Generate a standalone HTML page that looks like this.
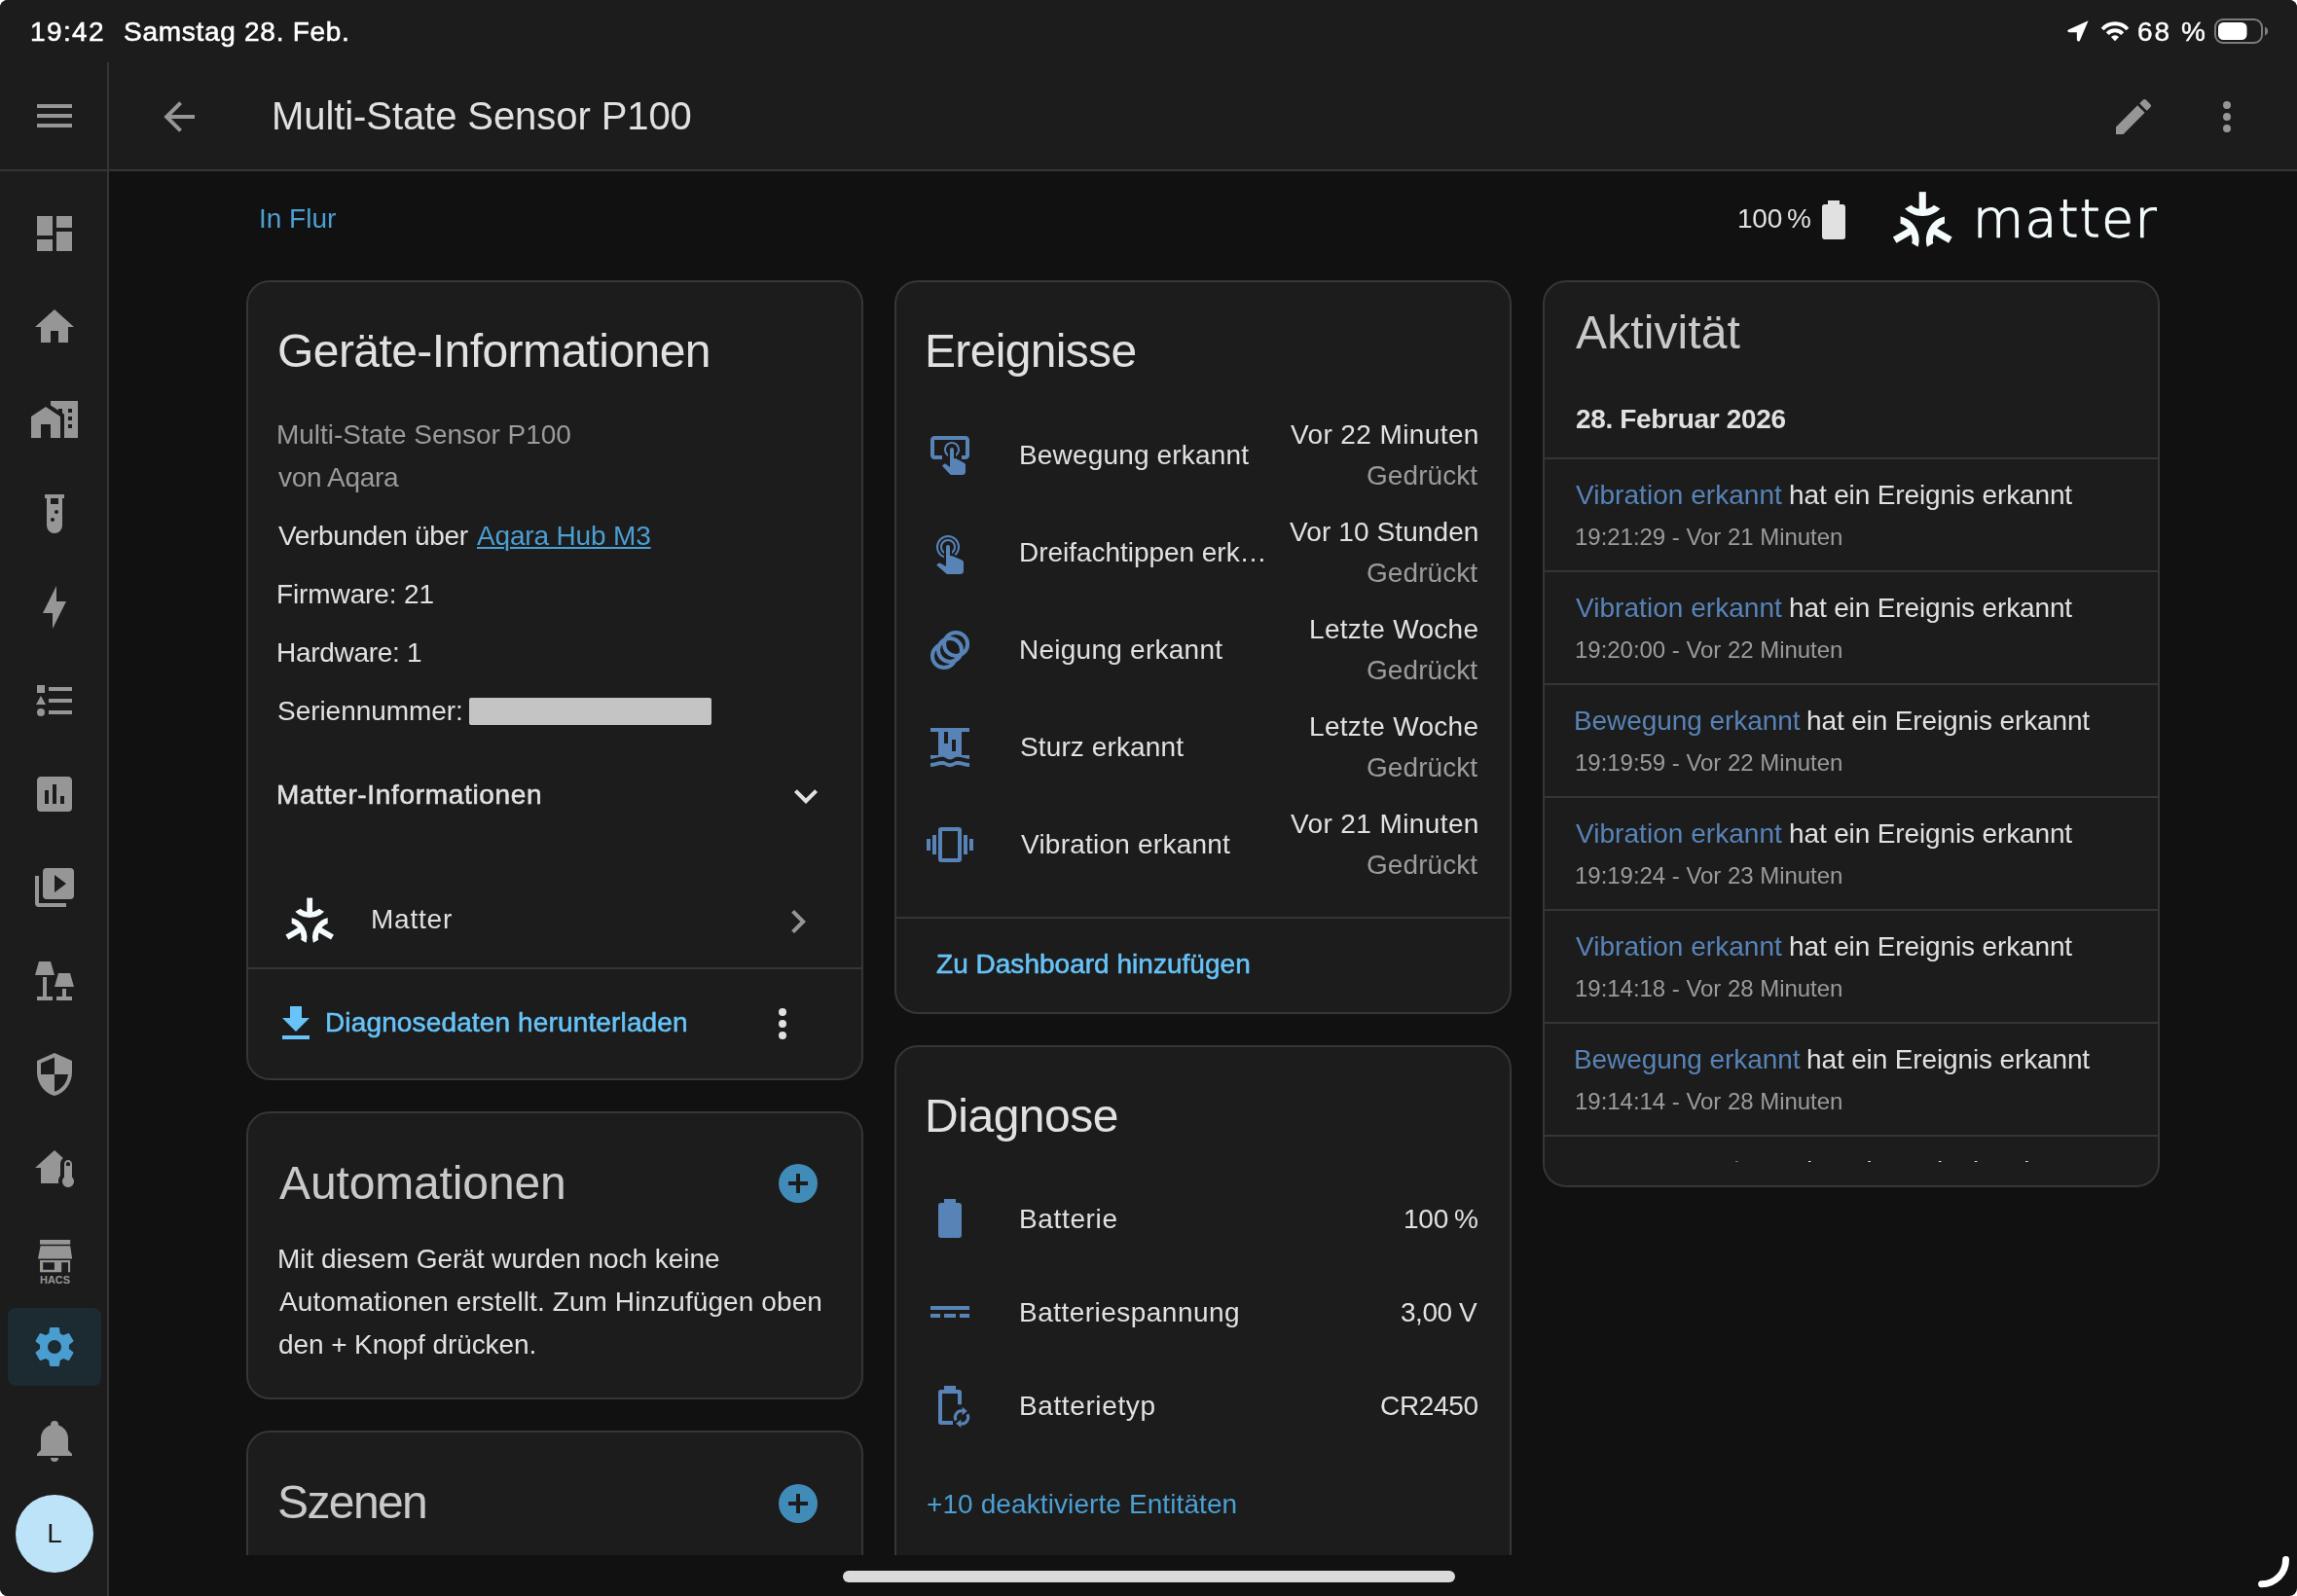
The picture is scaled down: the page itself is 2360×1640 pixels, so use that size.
<!DOCTYPE html>
<html lang="de">
<head>
<meta charset="utf-8">
<title>Multi-State Sensor P100 – Home Assistant</title>
<style>
html,body{margin:0;padding:0;background:#fff}
body{width:2360px;height:1640px;overflow:hidden;font-family:"Liberation Sans",sans-serif;-webkit-font-smoothing:antialiased}
#screen{position:relative;width:2360px;height:1640px;background:#111111;border-radius:8px;overflow:hidden}
h1,h2{margin:0;font-weight:400}
a{text-decoration:none}
.t{position:absolute;white-space:nowrap;font-kerning:normal;will-change:transform}
.i{position:absolute;display:block;overflow:visible}
.r{position:absolute}
.clip{position:absolute;overflow:hidden}
#content{position:absolute;left:0;top:0;width:2360px;height:1598px;overflow:hidden}
.card{position:absolute;box-sizing:border-box;background:#1c1c1c;border:2px solid #363636;border-radius:24px;display:block}
#statusbar{position:absolute;left:0;top:0;width:2360px;height:64px;background:#1c1c1c}
#header{position:absolute;left:112px;top:64px;width:2248px;height:112px;box-sizing:border-box;background:#1c1c1c;border-bottom:2px solid #353535}
#sidebar{position:absolute;left:0;top:64px;width:112px;height:1576px;box-sizing:border-box;background:#1c1c1c;border-right:2px solid #353535}
.avatar{will-change:transform;position:absolute;width:80px;height:80px;border-radius:50%;background:#bde3f9;color:#1c1c1c;font-size:28px;line-height:80px;text-align:center}
#homebar{position:absolute;left:866px;top:1614px;width:629px;height:12px;border-radius:6px;background:#dadada}
</style>
</head>
<body>
<div id="screen">
<main id="content">
<a id="area" class="t " style="top:206.75px;font-size:28px;line-height:35px;color:#4b9fd2;left:266.17px;letter-spacing:-0.010px;">In Flur</a>
<div id="batt" class="t " style="top:207.00px;font-size:28px;line-height:35px;color:#e1e1e1;left:1785.27px;letter-spacing:-0.246px;">100</div>
<div id="battp" class="t " style="top:207.00px;font-size:28px;line-height:35px;color:#e1e1e1;right:499.00px;">%</div>
<svg class="i" style="left:1860px;top:202px" width="48" height="48" viewBox="0 0 24 24" fill="#e1e1e1" ><path d="M16.67,4H15V2H9V4H7.33A1.33,1.33 0 0,0 6,5.33V20.67C6,21.4 6.6,22 7.33,22H16.67A1.33,1.33 0 0,0 18,20.67V5.33C18,4.6 17.4,4 16.67,4Z"/></svg>
<svg class="i" style="left:1940px;top:192px" width="76" height="76" viewBox="0 0 76 76"><defs><clipPath id="mclip2"><path d="M0,-26.21L-86.6,23.79L86.6,23.79Z"/></clipPath></defs><g transform="translate(35.26,38.16) scale(1.0000)"><g transform="rotate(0)"><path d="M0,-33V-11.60" fill="none" stroke="#f4fbfd" stroke-width="7.1"/><path clip-path="url(#mclip2)" d="M-18.90,-22.95A21.4,21.4 0 0 0 18.90,-22.95" fill="none" stroke="#f4fbfd" stroke-width="7.1"/></g><g transform="rotate(120)"><path d="M0,-33V-11.60" fill="none" stroke="#f4fbfd" stroke-width="7.1"/><path clip-path="url(#mclip2)" d="M-18.90,-22.95A21.4,21.4 0 0 0 18.90,-22.95" fill="none" stroke="#f4fbfd" stroke-width="7.1"/></g><g transform="rotate(240)"><path d="M0,-33V-11.60" fill="none" stroke="#f4fbfd" stroke-width="7.1"/><path clip-path="url(#mclip2)" d="M-18.90,-22.95A21.4,21.4 0 0 0 18.90,-22.95" fill="none" stroke="#f4fbfd" stroke-width="7.1"/></g></g></svg>
<div id="mw" class="t" style="left:2027px;top:190px;font-family:'DejaVu Sans',sans-serif;font-weight:200;font-size:53.4px;line-height:70px;color:#f4fbfd;letter-spacing:1.4px;-webkit-text-stroke:1.2px #f4fbfd">matter</div>
<section class="card " style="left:253px;top:288px;width:634px;height:822px">
<h2 id="c1h" class="t " style="top:41.00px;font-size:48px;line-height:60px;color:#e1e1e1;left:30.09px;letter-spacing:-0.563px;">Geräte-Informationen</h2>
<div id="c1m" class="t " style="top:139.00px;font-size:28px;line-height:35px;color:#9b9b9b;left:29.20px;letter-spacing:-0.028px;">Multi-State Sensor P100</div>
<div id="c1v" class="t " style="top:183.00px;font-size:28px;line-height:35px;color:#9b9b9b;left:31.40px;letter-spacing:-0.314px;">von Aqara</div>
<div id="c1c" class="t " style="top:243.00px;font-size:28px;line-height:35px;color:#e1e1e1;left:31.38px;letter-spacing:-0.323px;">Verbunden über</div>
<a id="c1l" class="t " style="top:243.00px;font-size:28px;line-height:35px;color:#4b9fd2;left:234.95px;letter-spacing:-0.160px;text-decoration:underline;text-decoration-thickness:2px;text-underline-offset:2px;">Aqara Hub M3</a>
<div id="c1f" class="t " style="top:303.00px;font-size:28px;line-height:35px;color:#e1e1e1;left:29.20px;letter-spacing:-0.110px;">Firmware: 21</div>
<div id="c1w" class="t " style="top:363.00px;font-size:28px;line-height:35px;color:#e1e1e1;left:29.20px;letter-spacing:-0.285px;">Hardware: 1</div>
<div id="c1s" class="t " style="top:423.00px;font-size:28px;line-height:35px;color:#e1e1e1;left:30.23px;letter-spacing:-0.048px;">Seriennummer:</div>
<div class="r" style="left:226.5px;top:426.5px;width:249.5px;height:28.5px;background:#c4c4c4;border-radius:2px;"></div>
<div id="c1i" class="t " style="top:509.00px;font-size:28px;line-height:35px;color:#e1e1e1;left:29.20px;letter-spacing:0.670px;-webkit-text-stroke:0.55px #e1e1e1;">Matter-Informationen</div>
<svg class="i" style="left:549px;top:504px" width="48" height="48" viewBox="0 0 24 24" fill="#e1e1e1" ><path d="M7.41,8.58L12,13.17L16.59,8.58L18,10L12,16L6,10L7.41,8.58Z"/></svg>
<svg class="i" style="left:33px;top:626px" width="60" height="60" viewBox="0 0 60 60"><defs><clipPath id="mclip1"><path d="M0,-26.21L-86.6,23.79L86.6,23.79Z"/></clipPath></defs><g transform="translate(30.2,33.5) scale(0.8152)"><g transform="rotate(0)"><path d="M0,-33V-11.60" fill="none" stroke="#f4fbfd" stroke-width="7.1"/><path clip-path="url(#mclip1)" d="M-18.90,-22.95A21.4,21.4 0 0 0 18.90,-22.95" fill="none" stroke="#f4fbfd" stroke-width="7.1"/></g><g transform="rotate(120)"><path d="M0,-33V-11.60" fill="none" stroke="#f4fbfd" stroke-width="7.1"/><path clip-path="url(#mclip1)" d="M-18.90,-22.95A21.4,21.4 0 0 0 18.90,-22.95" fill="none" stroke="#f4fbfd" stroke-width="7.1"/></g><g transform="rotate(240)"><path d="M0,-33V-11.60" fill="none" stroke="#f4fbfd" stroke-width="7.1"/><path clip-path="url(#mclip1)" d="M-18.90,-22.95A21.4,21.4 0 0 0 18.90,-22.95" fill="none" stroke="#f4fbfd" stroke-width="7.1"/></g></g></svg>
<div id="c1t" class="t " style="top:637.00px;font-size:28px;line-height:35px;color:#e1e1e1;left:125.70px;letter-spacing:0.780px;">Matter</div>
<svg class="i" style="left:541px;top:633px" width="48" height="48" viewBox="0 0 24 24" fill="#969696" ><path d="M8.59,16.58L13.17,12L8.59,7.41L10,6L16,12L10,18L8.59,16.58Z"/></svg>
<div class="r" style="left:0px;top:704px;width:630px;height:2px;background:#353535;"></div>
<svg class="i" style="left:25px;top:738px" width="48" height="48" viewBox="0 0 24 24" fill="#67c3f8" ><path d="M5,20H19V18H5M19,9H15V3H9V9H5L12,16L19,9Z"/></svg>
<div id="c1d" class="t " style="top:743.00px;font-size:28px;line-height:35px;color:#67c3f8;left:79.20px;letter-spacing:0.141px;-webkit-text-stroke:0.55px #67c3f8;">Diagnosedaten herunterladen</div>
<svg class="i" style="left:525px;top:738px" width="48" height="48" viewBox="0 0 24 24" fill="#e1e1e1" ><path d="M12,16A2,2 0 0,1 14,18A2,2 0 0,1 12,20A2,2 0 0,1 10,18A2,2 0 0,1 12,16M12,10A2,2 0 0,1 14,12A2,2 0 0,1 12,14A2,2 0 0,1 10,12A2,2 0 0,1 12,10M12,4A2,2 0 0,1 14,6A2,2 0 0,1 12,8A2,2 0 0,1 10,6A2,2 0 0,1 12,4Z"/></svg>
</section>
<section class="card " style="left:919px;top:288px;width:634px;height:754px">
<h2 id="c2h" class="t " style="top:41.00px;font-size:48px;line-height:60px;color:#e1e1e1;left:29.06px;letter-spacing:-0.671px;">Ereignisse</h2>
<svg class="i" style="left:31px;top:154px" width="48" height="48" viewBox="0 0 24 24" fill="#5783b7" ><path d="M13 5C15.21 5 17 6.79 17 9C17 10.5 16.2 11.77 15 12.46V11.24C15.61 10.69 16 9.89 16 9C16 7.34 14.66 6 13 6S10 7.34 10 9C10 9.89 10.39 10.69 11 11.24V12.46C9.8 11.77 9 10.5 9 9C9 6.79 10.79 5 13 5M20 20.5C19.97 21.32 19.32 21.97 18.5 22H13C12.62 22 12.26 21.85 12 21.57L8 17.37L8.74 16.6C8.93 16.39 9.2 16.28 9.5 16.28H9.7L12 18V9C12 8.45 12.45 8 13 8S14 8.45 14 9V13.47L15.21 13.6L19.15 15.79C19.68 16.03 20 16.56 20 17.14V20.5M20 2H4C2.9 2 2 2.9 2 4V12C2 13.11 2.9 14 4 14H8V12L4 12L4 4H20L20 12H18V14H20V13.96L20.04 14C21.13 14 22 13.09 22 12V4C22 2.9 21.11 2 20 2Z"/></svg>
<div id="e0l" class="t " style="top:160.00px;font-size:28px;line-height:35px;color:#e1e1e1;left:126.20px;letter-spacing:0.166px;">Bewegung erkannt</div>
<div id="e0t" class="t " style="top:139.00px;font-size:28px;line-height:35px;color:#e1e1e1;right:30.79px;letter-spacing:0.392px;">Vor 22 Minuten</div>
<div id="e0s" class="t " style="top:181.00px;font-size:28px;line-height:35px;color:#9b9b9b;right:32.72px;letter-spacing:0.072px;">Gedrückt</div>
<svg class="i" style="left:31px;top:254px" width="48" height="48" viewBox="0 0 24 24" fill="#5783b7" ><path d="M10,9A1,1 0 0,1 11,8A1,1 0 0,1 12,9V13.47L13.21,13.6L18.15,15.79C18.68,16.03 19,16.56 19,17.14V21.5C18.97,22.32 18.32,22.97 17.5,23H11C10.62,23 10.26,22.85 10,22.57L5.1,18.37L5.84,17.6C6.03,17.39 6.3,17.28 6.58,17.28H6.8L10,19V9M11,5A4,4 0 0,1 15,9C15,10.5 14.2,11.77 13,12.46V11.24C13.61,10.69 14,9.89 14,9A3,3 0 0,0 11,6A3,3 0 0,0 8,9C8,9.89 8.39,10.69 9,11.24V12.46C7.8,11.77 7,10.5 7,9A4,4 0 0,1 11,5M11,3A6,6 0 0,1 17,9C17,10.7 16.29,12.23 15.16,13.33L14.16,12.88C15.28,11.96 16,10.56 16,9A5,5 0 0,0 11,4A5,5 0 0,0 6,9C6,11.05 7.23,12.81 9,13.58V14.66C6.67,13.83 5,11.61 5,9A6,6 0 0,1 11,3Z"/></svg>
<div id="e1l" class="t " style="top:260.00px;font-size:28px;line-height:35px;color:#e1e1e1;left:126.20px;letter-spacing:-0.035px;">Dreifachtippen erk…</div>
<div id="e1t" class="t " style="top:239.00px;font-size:28px;line-height:35px;color:#e1e1e1;right:31.07px;letter-spacing:0.107px;">Vor 10 Stunden</div>
<div id="e1s" class="t " style="top:281.00px;font-size:28px;line-height:35px;color:#9b9b9b;right:32.72px;letter-spacing:0.072px;">Gedrückt</div>
<svg class="i" style="left:31px;top:354px" width="48" height="48" viewBox="0 0 24 24"><g fill="none" stroke="#5783b7" stroke-width="2"><circle cx="8.96" cy="15.04" r="6"/><circle cx="12" cy="12" r="5" fill="#1c1c1c" stroke="none"/><circle cx="12" cy="12" r="6"/><circle cx="15.04" cy="8.96" r="6"/></g></svg>
<div id="e2l" class="t " style="top:360.00px;font-size:28px;line-height:35px;color:#e1e1e1;left:126.20px;letter-spacing:0.251px;">Neigung erkannt</div>
<div id="e2t" class="t " style="top:339.00px;font-size:28px;line-height:35px;color:#e1e1e1;right:31.45px;letter-spacing:0.303px;">Letzte Woche</div>
<div id="e2s" class="t " style="top:381.00px;font-size:28px;line-height:35px;color:#9b9b9b;right:32.72px;letter-spacing:0.072px;">Gedrückt</div>
<svg class="i" style="left:31px;top:454px" width="48" height="48" viewBox="0 0 24 24" fill="#5783b7" ><path d="M2,2H22V4H18V16H22V18C20,18 18,16.9 16,16.9C14,16.9 14,18.2 12,18.2C10,18.2 10,16.9 8,16.9C6,16.9 4,18 2,18V16H6V4H2ZM9,4V10H11V4ZM13,8V14H15V8ZM2,20C4,20 6,19 8,19C10,19 10,20.1 12,20.1C14,20.1 14,19 16,19C18,19 20,20 22,20V22C20,22 18,21 16,21C14,21 14,22.1 12,22.1C10,22.1 10,21 8,21C6,21 4,22 2,22Z"/></svg>
<div id="e3l" class="t " style="top:460.00px;font-size:28px;line-height:35px;color:#e1e1e1;left:127.23px;letter-spacing:0.120px;">Sturz erkannt</div>
<div id="e3t" class="t " style="top:439.00px;font-size:28px;line-height:35px;color:#e1e1e1;right:31.45px;letter-spacing:0.303px;">Letzte Woche</div>
<div id="e3s" class="t " style="top:481.00px;font-size:28px;line-height:35px;color:#9b9b9b;right:32.72px;letter-spacing:0.072px;">Gedrückt</div>
<svg class="i" style="left:31px;top:554px" width="48" height="48" viewBox="0 0 24 24" fill="#5783b7" ><path d="M16,19H8V5H16M16.5,3H7.5A1.5,1.5 0 0,0 6,4.5V19.5A1.5,1.5 0 0,0 7.5,21H16.5A1.5,1.5 0 0,0 18,19.5V4.5A1.5,1.5 0 0,0 16.5,3M19,17H21V7H19M22,9V15H24V9M3,17H5V7H3M0,15H2V9H0V15Z"/></svg>
<div id="e4l" class="t " style="top:560.00px;font-size:28px;line-height:35px;color:#e1e1e1;left:128.38px;letter-spacing:0.228px;">Vibration erkannt</div>
<div id="e4t" class="t " style="top:539.00px;font-size:28px;line-height:35px;color:#e1e1e1;right:30.79px;letter-spacing:0.392px;">Vor 21 Minuten</div>
<div id="e4s" class="t " style="top:581.00px;font-size:28px;line-height:35px;color:#9b9b9b;right:32.72px;letter-spacing:0.072px;">Gedrückt</div>
<div class="r" style="left:0px;top:652px;width:630px;height:2px;background:#353535;"></div>
<div id="c2b" class="t " style="top:683.00px;font-size:28px;line-height:35px;color:#67c3f8;left:41.11px;letter-spacing:0.022px;-webkit-text-stroke:0.55px #67c3f8;">Zu Dashboard hinzufügen</div>
</section>
<section class="card " style="left:1585px;top:288px;width:634px;height:932px">
<h2 id="c3h" class="t " style="top:22.00px;font-size:48px;line-height:60px;color:#c9c9c9;left:32.41px;letter-spacing:0.112px;">Aktivität</h2>
<div id="c3d" class="t " style="top:123.00px;font-size:28px;line-height:35px;color:#e1e1e1;left:31.53px;letter-spacing:-0.337px;font-weight:700;">28. Februar 2026</div>
<div class="clip" style="left:0;top:0;width:630px;height:904px">
<div class="r" style="left:0px;top:180px;width:630px;height:2px;background:#353535;"></div>
<div id="l0n" class="t " style="top:201.00px;font-size:28px;line-height:35px;color:#5783b7;left:32.38px;letter-spacing:0.040px;">Vibration erkannt</div>
<div id="l0r" class="t " style="top:201.00px;font-size:28px;line-height:35px;color:#e1e1e1;left:250.56px;letter-spacing:-0.132px;">hat ein Ereignis erkannt</div>
<div id="l0t" class="t " style="top:246.50px;font-size:24px;line-height:30px;color:#9b9b9b;left:30.67px;letter-spacing:-0.033px;">19:21:29 - Vor 21 Minuten</div>
<div class="r" style="left:0px;top:296px;width:630px;height:2px;background:#353535;"></div>
<div id="l1n" class="t " style="top:317.00px;font-size:28px;line-height:35px;color:#5783b7;left:32.38px;letter-spacing:0.040px;">Vibration erkannt</div>
<div id="l1r" class="t " style="top:317.00px;font-size:28px;line-height:35px;color:#e1e1e1;left:250.56px;letter-spacing:-0.132px;">hat ein Ereignis erkannt</div>
<div id="l1t" class="t " style="top:362.50px;font-size:24px;line-height:30px;color:#9b9b9b;left:30.67px;letter-spacing:-0.033px;">19:20:00 - Vor 22 Minuten</div>
<div class="r" style="left:0px;top:412px;width:630px;height:2px;background:#353535;"></div>
<div id="l2n" class="t " style="top:433.00px;font-size:28px;line-height:35px;color:#5783b7;left:30.20px;letter-spacing:-0.068px;">Bewegung erkannt</div>
<div id="l2r" class="t " style="top:433.00px;font-size:28px;line-height:35px;color:#e1e1e1;left:269.06px;letter-spacing:-0.132px;">hat ein Ereignis erkannt</div>
<div id="l2t" class="t " style="top:478.50px;font-size:24px;line-height:30px;color:#9b9b9b;left:30.67px;letter-spacing:-0.033px;">19:19:59 - Vor 22 Minuten</div>
<div class="r" style="left:0px;top:528px;width:630px;height:2px;background:#353535;"></div>
<div id="l3n" class="t " style="top:549.00px;font-size:28px;line-height:35px;color:#5783b7;left:32.38px;letter-spacing:0.040px;">Vibration erkannt</div>
<div id="l3r" class="t " style="top:549.00px;font-size:28px;line-height:35px;color:#e1e1e1;left:250.56px;letter-spacing:-0.132px;">hat ein Ereignis erkannt</div>
<div id="l3t" class="t " style="top:594.50px;font-size:24px;line-height:30px;color:#9b9b9b;left:30.67px;letter-spacing:-0.033px;">19:19:24 - Vor 23 Minuten</div>
<div class="r" style="left:0px;top:644px;width:630px;height:2px;background:#353535;"></div>
<div id="l4n" class="t " style="top:665.00px;font-size:28px;line-height:35px;color:#5783b7;left:32.38px;letter-spacing:0.040px;">Vibration erkannt</div>
<div id="l4r" class="t " style="top:665.00px;font-size:28px;line-height:35px;color:#e1e1e1;left:250.56px;letter-spacing:-0.132px;">hat ein Ereignis erkannt</div>
<div id="l4t" class="t " style="top:710.50px;font-size:24px;line-height:30px;color:#9b9b9b;left:30.67px;letter-spacing:-0.033px;">19:14:18 - Vor 28 Minuten</div>
<div class="r" style="left:0px;top:760px;width:630px;height:2px;background:#353535;"></div>
<div id="l5n" class="t " style="top:781.00px;font-size:28px;line-height:35px;color:#5783b7;left:30.20px;letter-spacing:-0.068px;">Bewegung erkannt</div>
<div id="l5r" class="t " style="top:781.00px;font-size:28px;line-height:35px;color:#e1e1e1;left:269.06px;letter-spacing:-0.132px;">hat ein Ereignis erkannt</div>
<div id="l5t" class="t " style="top:826.50px;font-size:24px;line-height:30px;color:#9b9b9b;left:30.67px;letter-spacing:-0.033px;">19:14:14 - Vor 28 Minuten</div>
<div class="r" style="left:0px;top:876px;width:630px;height:2px;background:#353535;"></div>
<div id="l6n" class="t " style="top:896.30px;font-size:28px;line-height:35px;color:#5783b7;left:30.20px;letter-spacing:-0.068px;">Bewegung erkannt</div>
<div id="l6r" class="t " style="top:896.30px;font-size:28px;line-height:35px;color:#e1e1e1;left:269.06px;letter-spacing:-0.132px;">hat ein Ereignis erkannt</div>
<div id="l6t" class="t " style="top:942.50px;font-size:24px;line-height:30px;color:#9b9b9b;left:30.67px;letter-spacing:-0.033px;">19:14:13 - Vor 28 Minuten</div>
</div>
</section>
<section class="card " style="left:253px;top:1142px;width:634px;height:296px">
<h2 id="c4h" class="t " style="top:42.00px;font-size:48px;line-height:60px;color:#c9c9c9;left:31.91px;letter-spacing:-0.136px;">Automationen</h2>
<svg class="i" style="left:541px;top:48px" width="48" height="48" viewBox="0 0 24 24" fill="#418bb9" ><path d="M17,13H13V17H11V13H7V11H11V7H13V11H17M12,2A10,10 0 0,0 2,12A10,10 0 0,0 12,22A10,10 0 0,0 22,12A10,10 0 0,0 12,2Z"/></svg>
<div id="c4a" class="t " style="top:131.50px;font-size:28px;line-height:35px;color:#e1e1e1;left:29.70px;letter-spacing:-0.044px;">Mit diesem Gerät wurden noch keine</div>
<div id="c4b" class="t " style="top:175.50px;font-size:28px;line-height:35px;color:#e1e1e1;left:31.95px;letter-spacing:0.092px;">Automationen erstellt. Zum Hinzufügen oben</div>
<div id="c4c" class="t " style="top:219.50px;font-size:28px;line-height:35px;color:#e1e1e1;left:30.82px;letter-spacing:-0.092px;">den + Knopf drücken.</div>
</section>
<section class="card " style="left:919px;top:1074px;width:634px;height:560px">
<h2 id="c5h" class="t " style="top:41.00px;font-size:48px;line-height:60px;color:#e1e1e1;left:29.06px;letter-spacing:-0.463px;">Diagnose</h2>
<svg class="i" style="left:31px;top:152px" width="48" height="48" viewBox="0 0 24 24" fill="#5783b7" ><path d="M16.67,4H15V2H9V4H7.33A1.33,1.33 0 0,0 6,5.33V20.67C6,21.4 6.6,22 7.33,22H16.67A1.33,1.33 0 0,0 18,20.67V5.33C18,4.6 17.4,4 16.67,4Z"/></svg>
<div id="d0l" class="t " style="top:158.50px;font-size:28px;line-height:35px;color:#e1e1e1;left:126.20px;letter-spacing:0.649px;">Batterie</div>
<div id="d0v" class="t " style="top:158.50px;font-size:28px;line-height:35px;color:#e1e1e1;left:521.17px;letter-spacing:-0.246px;">100</div>
<div id="d0p" class="t " style="top:158.50px;font-size:28px;line-height:35px;color:#e1e1e1;right:32.00px;">%</div>
<svg class="i" style="left:31px;top:248px" width="48" height="48" viewBox="0 0 24 24" fill="#5783b7" ><path d="M2,9V11H22V9H2M2,13V15H7V13H2M9,13V15H15V13H9M17,13V15H22V13H17Z"/></svg>
<div id="d1l" class="t " style="top:254.50px;font-size:28px;line-height:35px;color:#e1e1e1;left:126.20px;letter-spacing:0.472px;">Batteriespannung</div>
<div id="d1v" class="t " style="top:254.50px;font-size:28px;line-height:35px;color:#e1e1e1;right:33.33px;letter-spacing:-0.453px;">3,00 V</div>
<svg class="i" style="left:31px;top:344px" width="48" height="48" viewBox="0 0 24 24"><path fill="#5783b7" d="M9,2H15V4H16.67A1.33,1.33 0 0 1 18,5.33V11.6H16V6H8V20H13.5V22H7.33A1.33,1.33 0 0 1 6,20.67V5.33A1.33,1.33 0 0 1 7.33,4H9Z"/><g fill="none" stroke="#5783b7" stroke-width="1.5"><path d="M15.05,19.75A3.3,3.3 0 0 1 18.5,14.94"/><path d="M20.95,16.65A3.3,3.3 0 0 1 17.5,21.46"/></g><path fill="#5783b7" d="M18.3,12.9L20.9,15L18.3,17.1Z M17.7,19.3L15.1,21.4L17.7,23.5Z"/></svg>
<div id="d2l" class="t " style="top:350.50px;font-size:28px;line-height:35px;color:#e1e1e1;left:126.20px;letter-spacing:0.611px;">Batterietyp</div>
<div id="d2v" class="t " style="top:350.50px;font-size:28px;line-height:35px;color:#e1e1e1;right:32.25px;letter-spacing:-0.344px;">CR2450</div>
<div id="c5m" class="t " style="top:452.00px;font-size:28px;line-height:35px;color:#4b9fd2;left:31.13px;letter-spacing:0.097px;">+10 deaktivierte Entitäten</div>
</section>
<section class="card " style="left:253px;top:1470px;width:634px;height:300px">
<h2 id="c6h" class="t " style="top:41.50px;font-size:48px;line-height:60px;color:#c9c9c9;left:29.82px;letter-spacing:-1.600px;">Szenen</h2>
<svg class="i" style="left:541px;top:48.5px" width="48" height="48" viewBox="0 0 24 24" fill="#418bb9" ><path d="M17,13H13V17H11V13H7V11H11V7H13V11H17M12,2A10,10 0 0,0 2,12A10,10 0 0,0 12,22A10,10 0 0,0 22,12A10,10 0 0,0 12,2Z"/></svg>
</section>
</main>
<header id="header">
<svg class="i" style="left:48px;top:32px" width="48" height="48" viewBox="0 0 24 24" fill="#969696" ><path d="M20,11V13H8L13.5,18.5L12.08,19.92L4.16,12L12.08,4.08L13.5,5.5L8,11H20Z"/></svg>
<h1 id="title" class="t " style="top:30.00px;font-size:40px;line-height:50px;color:#e1e1e1;left:166.72px;letter-spacing:-0.078px;">Multi-State Sensor P100</h1>
<svg class="i" style="left:2056px;top:32px" width="48" height="48" viewBox="0 0 24 24" fill="#969696" ><path d="M20.71,7.04C21.1,6.65 21.1,6 20.71,5.63L18.37,3.29C18,2.9 17.35,2.9 16.96,3.29L15.12,5.12L18.87,8.87M3,17.25V21H6.75L17.81,9.93L14.06,6.18L3,17.25Z"/></svg>
<svg class="i" style="left:2152px;top:32px" width="48" height="48" viewBox="0 0 24 24" fill="#969696" ><path d="M12,16A2,2 0 0,1 14,18A2,2 0 0,1 12,20A2,2 0 0,1 10,18A2,2 0 0,1 12,16M12,10A2,2 0 0,1 14,12A2,2 0 0,1 12,14A2,2 0 0,1 10,12A2,2 0 0,1 12,10M12,4A2,2 0 0,1 14,6A2,2 0 0,1 12,8A2,2 0 0,1 10,6A2,2 0 0,1 12,4Z"/></svg>
</header>
<nav id="sidebar">
<svg class="i" style="left:32px;top:31px" width="48" height="48" viewBox="0 0 24 24" fill="#969696" ><path d="M3,6H21V8H3V6M3,11H21V13H3V11M3,16H21V18H3V16Z"/></svg>
<div class="r" style="left:0px;top:110px;width:110px;height:2px;background:#353535;"></div>
<svg class="i" style="left:32px;top:152px" width="48" height="48" viewBox="0 0 24 24" fill="#969696" ><path d="M13,3V9H21V3M13,21H21V11H13M3,21H11V15H3M3,13H11V3H3V13Z"/></svg>
<svg class="i" style="left:32px;top:248px" width="48" height="48" viewBox="0 0 24 24" fill="#969696" ><path d="M10,20V14H14V20H19V12H22L12,3L2,12H5V20H10Z"/></svg>
<svg class="i" style="left:32px;top:344px" width="48" height="48" viewBox="0 0 24 24" fill="#969696" ><path d="M0,21V10L7.5,5L15,10V21H10V14H5V21H0M24,2V21H17V8.93L16,8.27V6H14V6.93L10,4.27V2H24M21,14H19V16H21V14M21,10H19V12H21V10M21,6H19V8H21V6Z"/></svg>
<svg class="i" style="left:32px;top:440px" width="48" height="48" viewBox="0 0 24 24" fill="#969696" ><path d="M7,2V4H8V18A4,4 0 0,0 12,22A4,4 0 0,0 16,18V4H17V2H7M11,16C10.4,16 10,15.6 10,15C10,14.4 10.4,14 11,14C11.6,14 12,14.4 12,15C12,15.6 11.6,16 11,16M13,12C12.4,12 12,11.6 12,11C12,10.4 12.4,10 13,10C13.6,10 14,10.4 14,11C14,11.6 13.6,12 13,12M14,7H10V4H14V7Z"/></svg>
<svg class="i" style="left:32px;top:536px" width="48" height="48" viewBox="0 0 24 24" fill="#969696" ><path d="M11,15H6L13,1V9H18L11,23V15Z"/></svg>
<svg class="i" style="left:32px;top:632px" width="48" height="48" viewBox="0 0 24 24" fill="#969696" ><path d="M5,9.5L7.5,14H2.5L5,9.5M3,4H7V8H3V4M5,20A2,2 0 0,0 7,18A2,2 0 0,0 5,16A2,2 0 0,0 3,18A2,2 0 0,0 5,20M9,5V7H21V5H9M9,19H21V17H9V19M9,13H21V11H9V13Z"/></svg>
<svg class="i" style="left:32px;top:728px" width="48" height="48" viewBox="0 0 24 24" fill="#969696" ><path d="M19,3H5C3.89,3 3,3.89 3,5V19A2,2 0 0,0 5,21H19A2,2 0 0,0 21,19V5C21,3.89 20.1,3 19,3M9,17H7V10H9V17M13,17H11V7H13V17M17,17H15V13H17V17Z"/></svg>
<svg class="i" style="left:32px;top:824px" width="48" height="48" viewBox="0 0 24 24" fill="#969696" ><path d="M4,6H2V20A2,2 0 0,0 4,22H18V20H4V6M20,2H8A2,2 0 0,0 6,4V16A2,2 0 0,0 8,18H20A2,2 0 0,0 22,16V4A2,2 0 0,0 20,2M12,14.5V5.5L18,10L12,14.5Z"/></svg>
<svg class="i" style="left:32px;top:920px" width="48" height="48" viewBox="0 0 24 24" fill="#969696" ><path d="M4,2H10L12,9H2ZM6,10H8V20H11V22H3V20H6ZM14,8H20L22,15H12ZM16,16H18V20H21V22H13V20H16Z"/></svg>
<svg class="i" style="left:32px;top:1016px" width="48" height="48" viewBox="0 0 24 24" fill="#969696" ><path d="M12,12H19C18.47,16.11 15.72,19.78 12,20.92V12H5V6.3L12,3.19M12,1L3,5V11C3,16.55 6.84,21.73 12,23C17.16,21.73 21,16.55 21,11V5L12,1Z"/></svg>
<svg class="i" style="left:32px;top:1112px" width="48" height="48" viewBox="0 0 24 24" fill="#969696" ><path d="M19 8C20.11 8 21 8.9 21 10V16.76C21.61 17.31 22 18.11 22 19C22 20.66 20.66 22 19 22C17.34 22 16 20.66 16 19C16 18.11 16.39 17.31 17 16.76V10C17 8.9 17.9 8 19 8M19 9C18.45 9 18 9.45 18 10V11H20V10C20 9.45 19.55 9 19 9M5 20V12H2L12 3L16.4 6.96C15.54 7.69 15 8.78 15 10V16C14.37 16.83 14 17.87 14 19L14.1 20H5Z"/></svg>
<svg class="i" style="left:0;top:1184px" width="110" height="96" viewBox="0 1248 110 96"><path fill="#969696" d="M41,1274H72.2V1278.8H41ZM41.6,1280.2H72.2L74.2,1293.6H39ZM41,1295H72.1V1307.2H70V1297.3H63.2V1307.2H41ZM44.2,1297.3V1304.8H55.9V1297.3Z" fill-rule="evenodd"/><text x="56.5" y="1319" text-anchor="middle" font-family="Liberation Sans, sans-serif" font-weight="700" font-size="11.8" textLength="31" lengthAdjust="spacingAndGlyphs" fill="#969696">HACS</text></svg>
<div class="r" style="left:8px;top:1280px;width:96px;height:80px;background:#1c2a32;border-radius:8px;"></div>
<svg class="i" style="left:32px;top:1296px" width="48" height="48" viewBox="0 0 24 24" fill="#4a9ecf" ><path d="M12,15.5A3.5,3.5 0 0,1 8.5,12A3.5,3.5 0 0,1 12,8.5A3.5,3.5 0 0,1 15.5,12A3.5,3.5 0 0,1 12,15.5M19.43,12.97C19.47,12.65 19.5,12.33 19.5,12C19.5,11.67 19.47,11.34 19.43,11L21.54,9.37C21.73,9.22 21.78,8.95 21.66,8.73L19.66,5.27C19.54,5.05 19.27,4.96 19.05,5.05L16.56,6.05C16.04,5.66 15.5,5.32 14.87,5.07L14.5,2.42C14.46,2.18 14.25,2 14,2H10C9.75,2 9.54,2.18 9.5,2.42L9.13,5.07C8.5,5.32 7.96,5.66 7.44,6.05L4.95,5.05C4.73,4.96 4.46,5.05 4.34,5.27L2.34,8.73C2.21,8.95 2.27,9.22 2.46,9.37L4.57,11C4.53,11.34 4.5,11.67 4.5,12C4.5,12.33 4.53,12.65 4.57,12.97L2.46,14.63C2.27,14.78 2.21,15.05 2.34,15.27L4.34,18.73C4.46,18.95 4.73,19.03 4.95,18.95L7.44,17.94C7.96,18.34 8.5,18.68 9.13,18.93L9.5,21.58C9.54,21.82 9.75,22 10,22H14C14.25,22 14.46,21.82 14.5,21.58L14.87,18.93C15.5,18.67 16.04,18.34 16.56,17.94L19.05,18.95C19.27,19.03 19.54,18.95 19.66,18.73L21.66,15.27C21.78,15.05 21.73,14.78 21.54,14.63L19.43,12.97Z"/></svg>
<svg class="i" style="left:32px;top:1392px" width="48" height="48" viewBox="0 0 24 24" fill="#969696" ><path d="M21,19V20H3V19L5,17V11C5,7.9 7.03,5.17 10,4.29C10,4.19 10,4.1 10,4A2,2 0 0,1 12,2A2,2 0 0,1 14,4C14,4.1 14,4.19 14,4.29C16.97,5.17 19,7.9 19,11V17L21,19M14,21A2,2 0 0,1 12,23A2,2 0 0,1 10,21"/></svg>
<div class="avatar" style="left:16px;top:1472px">L</div>
</nav>
<div id="statusbar">
<div id="clock" class="t " style="top:15.00px;font-size:28px;line-height:35px;color:#fff;left:30.87px;letter-spacing:1.366px;-webkit-text-stroke:0.55px #fff;">19:42</div>
<div id="date" class="t " style="top:15.00px;font-size:28px;line-height:35px;color:#fff;left:126.73px;letter-spacing:0.721px;-webkit-text-stroke:0.55px #fff;">Samstag 28. Feb.</div>
<div id="pct" class="t " style="top:15.00px;font-size:28px;line-height:35px;color:#fff;left:2195.58px;letter-spacing:2.031px;-webkit-text-stroke:0.4px #fff;">68 %</div>
<svg class="i" style="left:2120px;top:16px" width="216" height="32" viewBox="2120 16 216 32"><path fill="#fff" d="M2145.6,21.2L2125.2,30.4Q2123.4,31.4 2124.6,32.6Q2125.2,33.2 2126.2,33.2L2133.8,33.2L2133.9,40.8Q2134,42.4 2135.4,42.6Q2136.4,42.6 2137,41.4Z"/><g fill="none" stroke="#fff" stroke-linecap="butt"><path d="M2160.14,30.03A17.3,17.3 0 0 1 2185.86,30.03" stroke-width="3.9"/><path d="M2165.27,34.64A10.4,10.4 0 0 1 2180.73,34.64" stroke-width="4"/></g><path fill="#fff" d="M2173,42.3L2169,38A5.3,5.3 0 0 1 2177,38Z"/><rect x="2276" y="20" width="48" height="24" rx="8" fill="none" stroke="#7c7c7c" stroke-width="2"/><rect x="2279" y="23" width="29.5" height="18" rx="5.5" fill="#fff"/><path fill="#7c7c7c" d="M2327,27.4V36.6A5,5 0 0 0 2330.2,32A5,5 0 0 0 2327,27.4Z"/></svg>
</div>
<div id="homebar"></div>
<svg class="i" style="left:2310px;top:1590px" width="50" height="50" viewBox="2310 1590 50 50"><path d="M2348.5,1602.6A25,25 0 0 1 2323.6,1627.8" fill="none" stroke="#fff" stroke-width="7" stroke-linecap="round"/></svg>
</div>
</body>
</html>
